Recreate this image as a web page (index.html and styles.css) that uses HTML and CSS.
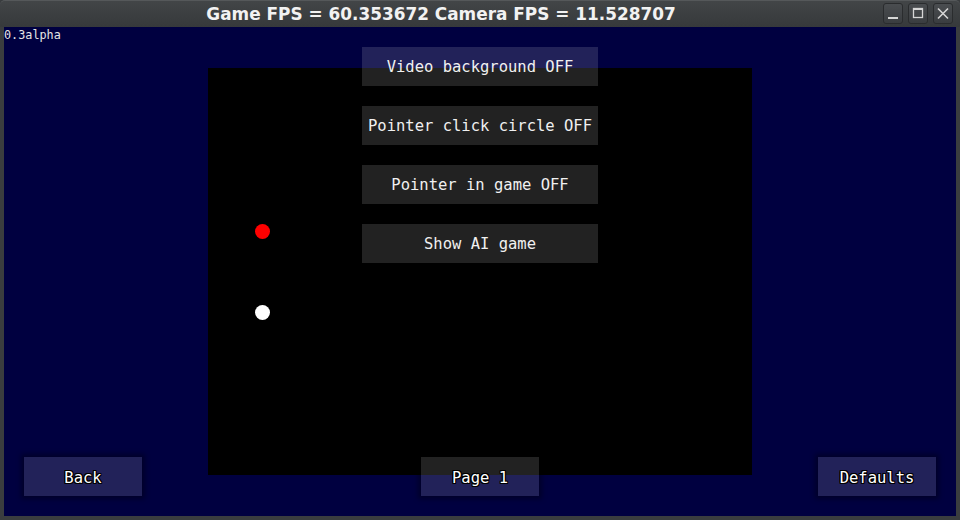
FILE: index.html
```html
<!DOCTYPE html>
<html>
<head>
<meta charset="utf-8">
<link rel="stylesheet" href="styles.css">
</head>
<body>
<div class="window">
  <div class="titlebar">
    <div class="title">Game FPS = 60.353672 Camera FPS = 11.528707</div>
    <div class="wbuttons">
      <div class="wbtn"><svg width="20" height="21" viewBox="0 0 20 21"><rect x="5" y="14" width="10" height="2" fill="#d6d6d6"/></svg></div>
      <div class="wbtn"><svg width="20" height="21" viewBox="0 0 20 21"><rect x="5.5" y="5.5" width="9" height="9" fill="none" stroke="#d6d6d6" stroke-width="1.3"/><rect x="5" y="5" width="10" height="2" fill="#d6d6d6"/></svg></div>
      <div class="wbtn"><svg width="20" height="21" viewBox="0 0 20 21"><path d="M5 5.5 L15 15.5 M15 5.5 L5 15.5" stroke="#d6d6d6" stroke-width="1.6" fill="none"/></svg></div>
    </div>
  </div>
  <div class="content">
    <div class="stage">
      <div class="game">
        <span class="dot red"></span>
        <span class="dot white"></span>
      </div>
      <div class="version">0.3alpha</div>
      <div class="menu">
        <div class="btn">Video background OFF</div>
        <div class="btn">Pointer click circle OFF</div>
        <div class="btn">Pointer in game OFF</div>
        <div class="btn">Show AI game</div>
      </div>
      <div class="bottom">
        <div class="btn outlined">Back</div>
        <div class="btn outlined">Page 1</div>
        <div class="btn outlined">Defaults</div>
      </div>
    </div>
  </div>
</div>
</body>
</html>
```

FILE: styles.css
```css
html, body {
  margin: 0;
  padding: 0;
  width: 960px;
  height: 520px;
  overflow: hidden;
  background: #3a3d3f;
}

.window {
  width: 960px;
  height: 520px;
  display: flex;
  flex-direction: column;
  background: #3a3d3f;
  border-radius: 4px 4px 0 0;
  box-sizing: border-box;
}

.titlebar {
  height: 27px;
  flex: none;
  display: flex;
  align-items: center;
  background: linear-gradient(#424547, #36393b);
  border-radius: 5px 5px 0 0;
  border-top: 1px solid #55585a;
  box-sizing: border-box;
}

.title {
  width: 882px;
  text-align: center;
  font-family: "DejaVu Sans", sans-serif;
  font-weight: bold;
  font-size: 16.9px;
  color: #f2f2f2;
  line-height: 26px;
  margin-top: -1px;
}

.wbuttons {
  display: flex;
  gap: 5px;
  margin-left: 1px;
  margin-top: -1px;
}

.wbtn {
  width: 20px;
  height: 21px;
  box-sizing: border-box;
  border: 1px solid #2a2c2e;
  border-radius: 3px;
  background: linear-gradient(#4a4d50, #3a3d40);
  display: flex;
}
.wbtn svg { margin: -1px; }

.content {
  flex: 1;
  margin: 0 4px 4px 4px;
  background: #000040;
  display: flex;
}

.stage {
  flex: 1;
  display: grid;
  grid-template-columns: 1fr;
  grid-template-rows: 1fr;
}

.stage > * {
  grid-area: 1 / 1;
}

.game {
  position: relative;
  z-index: 0;
  justify-self: center;
  align-self: start;
  margin-top: 41px;
  width: 544px;
  height: 407px;
  background: #000;
}

.dot {
  position: absolute;
  width: 15px;
  height: 15px;
  border-radius: 50%;
}
.dot.red { background: #ff0000; left: 47px; top: 156px; }
.dot.white { background: #ffffff; left: 47px; top: 237px; }

.version {
  z-index: 1;
  justify-self: start;
  align-self: start;
  margin: 1px 0 0 0;
  font-family: "DejaVu Sans Mono", monospace;
  font-size: 11.8px;
  line-height: 14px;
  color: #e6e6e6;
}

.menu {
  z-index: 1;
  justify-self: center;
  align-self: start;
  margin-top: 20px;
  width: 236px;
  display: flex;
  flex-direction: column;
  gap: 20px;
}

.btn {
  height: 39px;
  display: flex;
  align-items: center;
  justify-content: center;
  background: rgba(255, 255, 255, 0.133);
  font-family: "DejaVu Sans Mono", monospace;
  font-size: 15.5px;
  color: #f0f0f0;
  padding-top: 1px;
  box-sizing: border-box;
  white-space: nowrap;
}

.bottom {
  z-index: 1;
  align-self: end;
  display: flex;
  justify-content: space-between;
  margin: 0 20px 20px 20px;
}

.bottom .btn {
  width: 118px;
  box-shadow: 0 0 5px 3px rgba(0, 0, 0, 0.35);
  padding-top: 2px;
}

.outlined {
  color: #ffffff;
  text-shadow: 1px 0 0 #000, -1px 0 0 #000, 0 1px 0 #000, 0 -1px 0 #000,
    1px 1px 0 #000, -1px -1px 0 #000, 1px -1px 0 #000, -1px 1px 0 #000;
}
```
